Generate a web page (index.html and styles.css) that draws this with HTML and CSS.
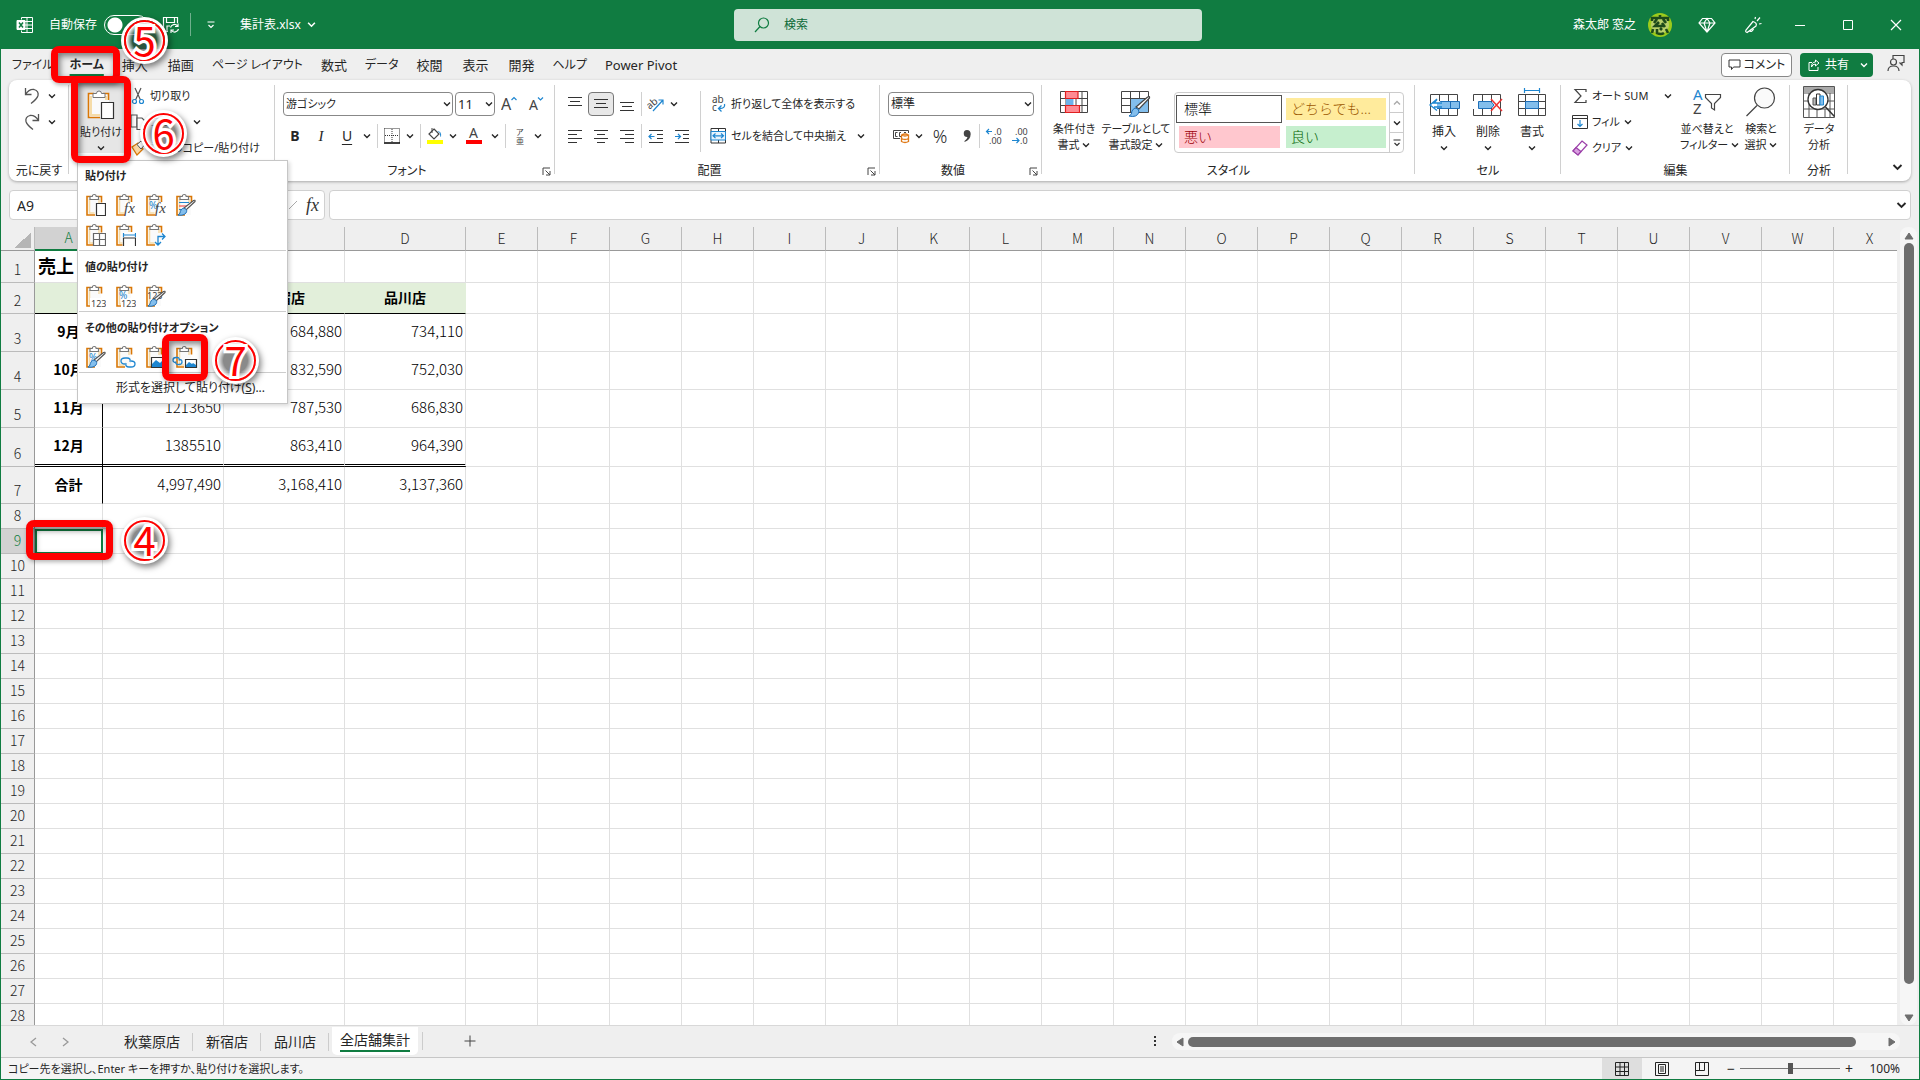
FILE: index.html
```html
<!DOCTYPE html>
<html lang="ja">
<head>
  <meta charset="UTF-8">
  <title>集計表.xlsx - Excel</title>
  <link rel="stylesheet" href="styles.css">
</head>
<body>
  <!-- shared icons -->
  <svg class="defs" aria-hidden="true">
    <symbol id="chev" viewBox="0 0 8 6"><path d="M1 1.5l3 3 3-3" fill="none" stroke="currentColor" stroke-width="1.4"/></symbol>
    <symbol id="clip" viewBox="0 0 20 24">
      <path d="M2 4.500h13v17.500H2z" fill="#fafafa"/>
      <path d="M5 3.500H1v18.500h8M11 3.500h4.500v6" fill="none" stroke="#d97706" stroke-width="1.600"/>
      <path d="M3.500 6v14h5M13 6v4" fill="none" stroke="#f6dca8" stroke-width="1.500"/>
      <path d="M4 6.500v-3h2.200a2 2 0 0 1 4 0h2.300v3z" fill="#fff" stroke="#777" stroke-width="1.200"/>
    </symbol>
    <symbol id="brush" viewBox="0 0 20 24">
      <path d="M19 8.500l-9 8.500-2-2L17.500 7.500q2-.8 1.500 1z" fill="#fff" stroke="#555" stroke-width="1.200"/>
      <path d="M8.500 15.500c2 .5 3 2 1.500 4.500-2 2.500-6 2.500-8 2 2-.5 2-3 3-5 1-1.500 2-2 3.500-1.500z" fill="#83beec" stroke="#1e6fb8"/>
    </symbol>
    <symbol id="launch" viewBox="0 0 9 9"><path d="M1 8V1h7M3.500 3.500L8 8M8 4v4H4" fill="none" stroke="#444"/></symbol>
  </svg>

  <header class="titlebar">
    <div class="title-left">
      <svg class="logo" width="18" height="18" viewBox="0 0 18 18" fill="none" stroke="#fff"><path d="M5.500 3.500v-2h11v15h-11v-2M11 1.500v15M5.500 5.500h11M9 9h7.500M9 12.500h7.500"/><path d="M1 4.500h8v9H1z" fill="#fff"/><path d="M3 6.500l4 5M7 6.500l-4 5" stroke="#107c41" stroke-width="1.500"/></svg>
      <label for="autosave">自動保存</label>
      <input type="checkbox" class="toggle" id="autosave">
      <button class="t-btn save" aria-label="保存"><svg width="18" height="18" viewBox="0 0 18 18" fill="none" stroke="#fff" stroke-width="1.200"><path d="M6 15.500H3.500l-2-2v-12h14V7M4.500 1.500v5h8v-5M5 15v-5h3"/><path d="M8.500 11.500a4 4 0 0 1 7-1.500M16 7.500V10.500h-3M16.500 13a4 4 0 0 1-7 1.500M9 17v-3h3"/></svg></button>
      <span class="t-sep"></span>
      <button class="t-btn custom" aria-label="クイック アクセス"><svg width="8" height="8" viewBox="0 0 8 8" fill="none" stroke="#fff" stroke-width="1.200"><path d="M0.500 1h7M1.500 4l2.500 2.500L6.500 4"/></svg></button>
      <button class="t-btn file">集計表.xlsx <svg width="9" height="7"><use href="#chev"/></svg></button>
    </div>
    <div class="search">
      <svg width="16" height="16" viewBox="0 0 16 16" fill="none" stroke="#107c41" stroke-width="1.200"><circle cx="9.500" cy="6" r="5"/><path d="M6 9.500L1 15"/></svg>
      <input type="text" placeholder="検索" aria-label="検索">
    </div>
    <div class="title-right">
      <span>森太郎 窓之</span>
      <svg class="avatar" width="24" height="24" viewBox="0 0 24 24"><circle cx="12" cy="12" r="12" fill="#9ccb1b"/><circle cx="12" cy="12" r="9" fill="#b9cf6a"/><path d="M4 8V5h16v3M12 2v3M9 6l-3 4M15 6l3 4M11 9l-4 4h9M14 10l3 4M5 16l-1 4M9 16v4q4 2 7 0M12 15l2 2M18 16l2 4" fill="none" stroke="#1d4a1a" stroke-width="2.600"/></svg>
      <button class="t-btn win tool" aria-label="プレミアム"><svg width="18" height="16" viewBox="0 0 18 16" fill="none" stroke="#fff" stroke-width="1.200"><path d="M4.500 1.500h9L17 6 9 15 1 6zM1 6h16M6 6l3 9 3-9-3-4.500z"/></svg></button>
      <button class="t-btn win tool" aria-label="新機能"><svg width="18" height="18" viewBox="0 0 18 18" fill="none" stroke="#fff" stroke-width="1.200"><path d="M9 5.500L2 14q-1 2 1 2.500l9-6.500q1.500-3-3-4.500zM5 14.500q2.500 2.500 4.500-1.500M11 3l.5-2M13 5l3-3.500M15 8l2.500-.5"/></svg></button>
      <button class="t-btn win" aria-label="最小化"><svg width="12" height="12" viewBox="0 0 12 12"><path d="M1 6.500h10" stroke="#fff"/></svg></button>
      <button class="t-btn win" aria-label="最大化"><svg width="12" height="12" viewBox="0 0 12 12"><path d="M1.500 1.500h9v9h-9z" fill="none" stroke="#fff"/></svg></button>
      <button class="t-btn win" aria-label="閉じる"><svg width="12" height="12" viewBox="0 0 12 12"><path d="M1 1l10 10M11 1L1 11" stroke="#fff" stroke-width="1.200"/></svg></button>
    </div>
  </header>

  <nav class="tabs">
    <a href="#" class="tab kana">ファイル</a>
    <a href="#" class="tab kana active">ホーム</a>
    <a href="#" class="tab">挿入</a>
    <a href="#" class="tab">描画</a>
    <a href="#" class="tab kana">ページ レイアウト</a>
    <a href="#" class="tab">数式</a>
    <a href="#" class="tab kana">データ</a>
    <a href="#" class="tab">校閲</a>
    <a href="#" class="tab">表示</a>
    <a href="#" class="tab">開発</a>
    <a href="#" class="tab kana">ヘルプ</a>
    <a href="#" class="tab">Power Pivot</a>
    <div class="tab-actions">
      <button class="comment"><svg width="13" height="12" viewBox="0 0 13 12"><path d="M1 1h11v7H5.500L3.500 10.500V8H1z" fill="none" stroke="#333"/></svg>コメント</button>
      <button class="share"><svg width="12" height="12" viewBox="0 0 12 12" fill="none" stroke="#fff"><path d="M4 3.500H1v8h9V8"/><path d="M7.500 1L11 4 7.500 7V5Q4.500 5 3.500 8 3.500 3 7.500 3z"/></svg>共有<svg class="share-chev" width="8" height="6"><use href="#chev"/></svg></button>
      <button class="people" aria-label="ユーザー"><svg width="18" height="18" viewBox="0 0 18 18" fill="none" stroke="#444" stroke-width="1.200"><path d="M6 5V1.500h11v7h-2v2.500L12.500 8.500"/><circle cx="6.500" cy="8" r="3"/><path d="M1 17q0-5 5.500-5t5.500 5"/></svg></button>
    </div>
  </nav>

  <section class="ribbon">
    <div class="group g-undo">
      <div class="rows3">
        <div class="row"><button class="ib" aria-label="元に戻す"><svg width="16" height="18" viewBox="0 0 16 18" fill="none" stroke="#555" stroke-width="1.300"><path d="M1.500 1v6.500h6M1.500 7.500Q5 2 10 2.500q5 1.500 4 6Q13 12 7 16.500"/></svg></button><button class="ch" aria-label="一覧"><svg width="8" height="6"><use href="#chev"/></svg></button></div>
        <div class="row"><button class="ib" aria-label="やり直し"><svg width="16" height="18" viewBox="0 0 16 18" fill="none" stroke="#555" stroke-width="1.300"><path d="M14.500 1v6.500h-6M14.500 7.500Q11 2 6 2.500q-5 1.500-4 6Q3 12 9 16.500"/></svg></button><button class="ch" aria-label="一覧"><svg width="8" height="6"><use href="#chev"/></svg></button></div>
      </div>
      <div class="label">元に戻す</div>
    </div>

    <div class="group g-clip">
      <div class="cols">
        <button class="big paste">
          <span class="pic"><svg width="28" height="30" viewBox="0 0 28 30"><path d="M2 4h20v23H2z" fill="#fafafa"/><path d="M7 3.500H1.500v24H13M16 3.500h5.500V10" fill="none" stroke="#d97706" stroke-width="1.600"/><path d="M4 6v19h9M19 6v4" fill="none" stroke="#f6dca8" stroke-width="2"/><path d="M6 7.500v-4h3.500a2.500 2.500 0 0 1 5 0H18v4z" fill="#fff" stroke="#777"/><path d="M14.500 12.500h12v16h-12z" fill="#fff" stroke="#333" stroke-width="1.200"/></svg></span>
          貼り付け
          <svg class="down" width="8" height="6"><use href="#chev"/></svg>
        </button>
        <div class="rows3">
          <button class="row cmd"><svg width="16" height="18" viewBox="0 0 16 18" fill="none" stroke="#555" stroke-width="1.200"><path d="M5 1l5.500 12M11 1L5.500 13"/><circle cx="4.500" cy="14.500" r="2" stroke="#1e86d0"/><circle cx="11.500" cy="14.500" r="2" stroke="#1e86d0"/></svg>切り取り</button>
          <button class="row cmd"><svg width="16" height="16" viewBox="0 0 16 16" fill="#fff" stroke="#555" stroke-width="1.200"><path d="M1 1h6v12H1z"/><path d="M7 4h5l3 3v8.500H7z"/></svg>コピー<svg class="c-chev" width="8" height="6"><use href="#chev"/></svg></button>
          <button class="row cmd"><svg width="16" height="16" viewBox="0 0 16 16"><path d="M2 7l6-4 5 6-6 6z" fill="#fbd9a4" stroke="#d97706" stroke-width="1.300"/><path d="M7 4.500L11 1l3.500 4-3.500 4z" fill="#fff" stroke="#555"/></svg>書式のコピー/貼り付け</button>
        </div>
      </div>

      <div class="menu">
        <h3>貼り付け</h3>
        <div class="opts">
          <button aria-label="貼り付け"><svg viewBox="0 0 20 24"><use href="#clip"/><path d="M10.500 10.500h9v12h-9z" fill="#fff" stroke="#333" stroke-width="1.200"/></svg></button>
          <button aria-label="数式"><svg viewBox="0 0 20 24"><use href="#clip"/><path d="M9 9h11v14H9z" fill="#fff"/><text x="8" y="20" class="fx">fx</text></svg></button>
          <button aria-label="数式と数値の書式"><svg viewBox="0 0 20 24"><use href="#clip"/><path d="M10 9h10v14H10z" fill="#fff"/><text x="3" y="16" class="pc">%</text><text x="9" y="20" class="fx">fx</text></svg></button>
          <button aria-label="元の書式を保持"><svg viewBox="0 0 20 24"><use href="#clip"/><path d="M3 9.500h10M3 16.500h6" stroke="#1e86d0"/><path d="M3 13h9" stroke="#e33"/><use href="#brush"/></svg></button>
          <button aria-label="罫線なし"><svg viewBox="0 0 20 24"><use href="#clip"/><path d="M7.500 10.500h12v12h-12zM13.500 10.500v12M7.500 16.500h12" fill="#fff" stroke="#666" stroke-width="1.200"/></svg></button>
          <button aria-label="元の列幅を保持"><svg viewBox="0 0 20 24"><use href="#clip"/><path d="M6.500 9h14v14h-14z" fill="#fff"/><path d="M7.500 23v-8h12v8" fill="#fff" stroke="#333" stroke-width="1.200"/><path d="M7.500 10v4M19.500 10v4M7.500 12h12" stroke="#1e86d0" stroke-width="1.200"/></svg></button>
          <button aria-label="行/列の入れ替え"><svg viewBox="0 0 20 24"><use href="#clip"/><path d="M19 13.500h-7V22M16 10.500l3 3-3 3M9 19l3 3 3-3" fill="none" stroke="#1e86d0" stroke-width="1.300"/></svg></button>
        </div>
        <h3>値の貼り付け</h3>
        <div class="opts">
          <button aria-label="値"><svg viewBox="0 0 20 24"><use href="#clip"/><path d="M4 14h16v9H4z" fill="#fff"/><text x="5" y="23" class="n">123</text></svg></button>
          <button aria-label="値と数値の書式"><svg viewBox="0 0 20 24"><use href="#clip"/><path d="M5 14h15v9H5z" fill="#fff"/><text x="3" y="15" class="pc">%</text><text x="5" y="23" class="n">123</text></svg></button>
          <button aria-label="値と元の書式"><svg viewBox="0 0 20 24"><use href="#clip"/><text x="1" y="15" class="n">123</text><use href="#brush"/></svg></button>
        </div>
        <h3>その他の貼り付けオプション</h3>
        <div class="opts">
          <button aria-label="書式設定"><svg viewBox="0 0 20 24"><use href="#clip"/><text x="3" y="16" class="pc">%</text><use href="#brush"/></svg></button>
          <button aria-label="リンク貼り付け"><svg viewBox="0 0 20 24"><use href="#clip"/><path d="M9 19q-4 0-4-3t4-3h2q4 0 3 4M15 16q4 0 4 3t-4 3h-2q-4 0-3-4" fill="none" stroke="#1e86d0" stroke-width="1.300"/></svg></button>
          <button aria-label="図"><svg viewBox="0 0 20 24"><use href="#clip"/><path d="M5.500 12.500h14v10h-14z" fill="#fff" stroke="#333" stroke-width="1.200"/><path d="M6 22v-3l4-4 4 3 2-2 3 3v3z" fill="#1e86d0"/></svg></button>
          <button aria-label="リンクされた図"><svg class="over" viewBox="0 0 20 24"><use href="#clip"/><path d="M8 13h12v10H8z" fill="#fff"/><path d="M9.500 14.500h11v8h-11z" fill="#fff" stroke="#333" stroke-width="1.200"/><path d="M10 22v-2l3-3 3 2 1-1 3 2v2z" fill="#1e86d0"/><path d="M0 17.500q-3 0-3-2.500t3-2.500h1q3 0 2 3M3 14.500q3 0 3 2.500t-3 2.500H2q-3 0-2-3" fill="none" stroke="#1e86d0" stroke-width="1.300"/></svg></button>
        </div>
        <button class="special">形式を選択して貼り付け(<u>S</u>)...</button>
      </div>
    </div>

    <div class="group g-font">
      <div class="rows2">
        <div class="row">
          <span class="pick name"><select aria-label="フォント"><option>游ゴシック</option></select><svg width="8" height="6"><use href="#chev"/></svg></span>
          <span class="pick size"><select aria-label="サイズ"><option>11</option></select><svg width="8" height="6"><use href="#chev"/></svg></span>
          <button class="ib m" aria-label="拡大"><svg width="16" height="16" viewBox="0 0 16 16"><text x="0" y="14" class="a1">A</text><path d="M10.500 4L13 1.500 15.500 4" fill="none" stroke="#1e86d0" stroke-width="1.200"/></svg></button>
          <button class="ib" aria-label="縮小"><svg width="16" height="16" viewBox="0 0 16 16"><text x="1" y="14" class="a2">A</text><path d="M10 1.500L12.500 4 15 1.500" fill="none" stroke="#1e86d0" stroke-width="1.200"/></svg></button>
        </div>
        <div class="row">
          <button class="ib bold">B</button><button class="ib italic">I</button><button class="ib under">U</button><button class="ch" aria-label="下線"><svg width="8" height="6"><use href="#chev"/></svg></button>
          <span class="sep"></span>
          <button class="ib s" aria-label="罫線"><svg width="16" height="16" viewBox="0 0 16 16" fill="none" stroke="#333"><path d="M.5.500h15v14M.5.500v14M8 1v13M1 7.500h14" stroke-dasharray="1 1"/><path d="M0 15h16" stroke="#000" stroke-width="1.500"/></svg></button><button class="ch" aria-label="罫線一覧"><svg width="8" height="6"><use href="#chev"/></svg></button>
          <span class="sep"></span>
          <button class="ib s" aria-label="塗りつぶし"><svg width="16" height="18" viewBox="0 0 16 18"><path d="M7 2l5 5-5 5-5-5z" fill="#fff" stroke="#444" stroke-width="1.200"/><path d="M5 1v5" stroke="#444"/><path d="M10 4q5 0 4 6-1 0-1-4z" fill="#1e86d0"/><path d="M0 13h16v4H0z" fill="#ff0"/></svg></button><button class="ch" aria-label="塗りつぶしの色"><svg width="8" height="6"><use href="#chev"/></svg></button>
          <button class="ib m" aria-label="文字色"><svg width="16" height="18" viewBox="0 0 16 18"><text x="3" y="11" class="a2">A</text><path d="M0 13h16v4H0z" fill="#f00"/></svg></button><button class="ch" aria-label="文字色一覧"><svg width="8" height="6"><use href="#chev"/></svg></button>
          <span class="sep"></span>
          <button class="ib s" aria-label="ふりがな"><svg width="10" height="18" viewBox="0 0 10 18"><text x="1" y="8" class="ruby">ア</text><text x="1" y="17" class="ruby">亜</text></svg></button><button class="ch" aria-label="ふりがな一覧"><svg width="8" height="6"><use href="#chev"/></svg></button>
        </div>
      </div>
      <div class="label with-launch">フォント<svg class="launch" width="9" height="9"><use href="#launch"/></svg></div>
    </div>

    <div class="group g-align">
      <div class="cols">
        <div class="rows2">
          <div class="row">
            <button class="ib" aria-label="上揃え"><svg width="16" height="16" viewBox="0 0 16 16" stroke="#333"><path d="M1 1.500h14M3 5.500h10M1 9.500h14"/></svg></button>
            <button class="ib on" aria-label="中央揃え"><svg width="16" height="16" viewBox="0 0 16 16" stroke="#333"><path d="M1 3.500h14M3 7.500h10M1 11.500h14"/></svg></button>
            <button class="ib" aria-label="下揃え"><svg width="16" height="16" viewBox="0 0 16 16" stroke="#333"><path d="M1 6.500h14M3 10.500h10M1 14.500h14"/></svg></button>
            <span class="sep thin"></span>
            <button class="ib" aria-label="方向"><svg width="18" height="18" viewBox="0 0 18 18"><text x="-1" y="11" class="ab" transform="rotate(-40 6 8)">ab</text><path d="M6 16L16 5M11.500 5H16v4.500" fill="none" stroke="#1e86d0" stroke-width="1.200"/></svg></button><button class="ch narrow" aria-label="方向一覧"><svg width="8" height="6"><use href="#chev"/></svg></button>
          </div>
          <div class="row">
            <button class="ib" aria-label="左揃え"><svg width="16" height="16" viewBox="0 0 16 16" stroke="#333"><path d="M1 2.500h14M1 6.500h9M1 10.500h14M1 14.500h9"/></svg></button>
            <button class="ib" aria-label="中央"><svg width="16" height="16" viewBox="0 0 16 16" stroke="#333"><path d="M1 2.500h14M4 6.500h8M1 10.500h14M4 14.500h8"/></svg></button>
            <button class="ib" aria-label="右揃え"><svg width="16" height="16" viewBox="0 0 16 16" stroke="#333"><path d="M1 2.500h14M6 6.500h9M1 10.500h14M6 14.500h9"/></svg></button>
            <span class="sep thin"></span>
            <button class="ib" aria-label="インデント減"><svg width="16" height="16" viewBox="0 0 16 16" fill="none" stroke="#333"><path d="M1 2.500h14M9 6.500h6M9 10.500h6M1 14.500h14"/><path d="M6.500 8.500h-5M3.500 6l-2.500 2.500 2.500 2.500" stroke="#1e86d0" stroke-width="1.200"/></svg></button>
            <button class="ib" aria-label="インデント増"><svg width="16" height="16" viewBox="0 0 16 16" fill="none" stroke="#333"><path d="M1 2.500h14M9 6.500h6M9 10.500h6M1 14.500h14"/><path d="M1 8.500h5M4 6l2.500 2.500-2.500 2.500" stroke="#1e86d0" stroke-width="1.200"/></svg></button>
          </div>
        </div>
        <div class="rows2 wrapcol">
          <button class="row cmd"><svg width="18" height="18" viewBox="0 0 18 18"><text x="3" y="8" class="ab">ab</text><text x="3" y="16" class="ab">c</text><path d="M15.500 9q1 4.500-5 4.500M12.500 10.500l-3 3 3 3" fill="none" stroke="#1e86d0" stroke-width="1.300"/></svg>折り返して全体を表示する</button>
          <button class="row cmd"><svg width="18" height="16" viewBox="0 0 18 16" fill="none" stroke="#333"><path d="M2 .5h14.500v14.500H2zM9.500.5v3M9.500 12v3"/><path d="M2 3.500h14.500V12H2z" stroke="#1e86d0" fill="#e8f3fc"/><path d="M4 7.800h10M6.500 5.500L4 7.800l2.500 2.300M12 5.500l2.500 2.300L12 10.100" stroke="#1e86d0" stroke-width="1.200"/></svg>セルを結合して中央揃え<svg class="c-chev" width="8" height="6"><use href="#chev"/></svg></button>
        </div>
      </div>
      <div class="label with-launch">配置<svg class="launch" width="9" height="9"><use href="#launch"/></svg></div>
    </div>

    <div class="group g-num">
      <div class="rows2">
        <div class="row"><span class="pick fmt"><select aria-label="表示形式"><option>標準</option></select><svg width="8" height="6"><use href="#chev"/></svg></span></div>
        <div class="row">
          <button class="ib" aria-label="通貨"><svg width="18" height="16" viewBox="0 0 18 16" fill="none" stroke="#444"><path d="M8 10.500H1.500v-8h15V5M5.500 4.500h-2v4h2M9 4.500H7.500v4H9M12 4.500h2"/><path d="M9.500 7v6.500q3.500 2 7 0V7q-3.500-2-7 0zq3.500 2 7 0M9.500 10.500q3.500 2 7 0" fill="#fff" stroke="#e07b1a" stroke-width="1.300"/></svg></button><button class="ch narrow" aria-label="通貨一覧"><svg width="8" height="6"><use href="#chev"/></svg></button>
          <button class="ib l pct">%</button>
          <button class="ib s comma" aria-label="桁区切り"><svg width="10" height="14" viewBox="0 0 10 14"><path d="M5 1a3.500 3.500 0 1 0 .5 7Q5 10.500 2.500 12v1Q8.500 11 8.700 5 8.500 1 5 1z" fill="#444"/></svg></button>
          <span class="sep thin"></span>
          <button class="ib" aria-label="小数点以下の表示桁数を増やす"><svg width="18" height="18" viewBox="0 0 18 18"><path d="M7 4.500H1.500M4 2L1.500 4.500 4 7" fill="none" stroke="#1e86d0" stroke-width="1.200"/><text x="9" y="8" class="dec">.0</text><text x="4" y="17" class="dec">.00</text></svg></button>
          <button class="ib" aria-label="小数点以下の表示桁数を減らす"><svg width="18" height="18" viewBox="0 0 18 18"><path d="M1 13.500h7M5.500 11L8 13.500 5.500 16" fill="none" stroke="#1e86d0" stroke-width="1.200"/><text x="4" y="8" class="dec">.00</text><text x="9" y="17" class="dec">.0</text></svg></button>
        </div>
      </div>
      <div class="label with-launch">数値<svg class="launch" width="9" height="9"><use href="#launch"/></svg></div>
    </div>

    <div class="group g-style">
      <div class="cols">
        <button class="big b48"><span class="pic"><svg width="28" height="22" viewBox="0 0 28 22"><path d="M.5.500h27v21H.5zM.5 7.500h27M.5 14.500h27M6 .5v21M16 .5v21M22 .5v21" fill="#fff" stroke="#444"/><path d="M5.500.500h12.500v7H5.500zM5.500 14.500h14v7h-14z" fill="#ff8a92" stroke="#e02020" stroke-width="1.200"/><path d="M6 8h7.500v6H6z" fill="#6cb2ea"/></svg></span>条件付き<br>書式 <svg class="down-in" width="8" height="6"><use href="#chev"/></svg></button>
        <button class="big b76"><span class="pic low"><svg width="30" height="28" viewBox="0 0 30 28"><path d="M.5.500h27v21H.5zM.5 7.500h27M.5 14.500h27M9.500.5v21M18.500.5v21" fill="#fff" stroke="#444"/><path d="M10 8h17v13H10z" fill="#83beec"/><path d="M28.500 7L18 18l-3-2L26 6.500q3-2 2.500.5z" fill="#fff" stroke="#444" stroke-width="1.200"/><path d="M14 17q4 0 4 4-2 6-10 4 3-1 3-5 1-2 3-3z" fill="#83beec" stroke="#1e6fb8"/></svg></span>テーブルとして<br>書式設定 <svg class="down-in" width="8" height="6"><use href="#chev"/></svg></button>
        <div class="gallery">
          <button class="sw sel">標準</button>
          <button class="sw neutral">どちらでも...</button>
          <button class="sw bad">悪い</button>
          <button class="sw good">良い</button>
          <div class="scroller">
            <button class="dim" aria-label="上"><svg class="flip" width="8" height="6"><use href="#chev"/></svg></button>
            <button aria-label="下"><svg width="8" height="6"><use href="#chev"/></svg></button>
            <button aria-label="その他"><svg width="8" height="8" viewBox="0 0 8 8" fill="none" stroke="#333" stroke-width="1.200"><path d="M.5 1h7M1.500 4L4 6.500 6.500 4"/></svg></button>
          </div>
        </div>
      </div>
      <div class="label">スタイル</div>
    </div>

    <div class="group g-cell">
      <div class="cols">
        <button class="big b44"><span class="pic"><svg width="32" height="22" viewBox="0 0 32 22"><path d="M2.500.500h27v21h-27zM11.500.5v21M20.500.5v21" fill="#fff" stroke="#444"/><path d="M8 7.500h23.500v7H8zM22.500 7.500v7" fill="#83beec" stroke="#1e6fb8"/><path d="M14 9H6l3-3.500M6 13h8M9 16.500L2 11l7-6" fill="#fff" stroke="#1e86d0" stroke-width="1.300"/></svg></span>挿入<svg class="down" width="8" height="6"><use href="#chev"/></svg></button>
        <button class="big b44"><span class="pic"><svg width="30" height="22" viewBox="0 0 30 22"><path d="M.5.500h27v21H.5zM9.500.5v21M18.500.5v21" fill="#fff" stroke="#444"/><path d="M0 7h18v8H0z" fill="#fff"/><path d="M5.500 7.500H18l3 3.500-3 3.500H5.500z" fill="#83beec" stroke="#1e6fb8"/><path d="M18 5l11 12M29 5L18 17" stroke="#e33" stroke-width="1.500"/></svg></span>削除<svg class="down" width="8" height="6"><use href="#chev"/></svg></button>
        <button class="big b44"><span class="pic up"><svg width="28" height="28" viewBox="0 0 28 28"><path d="M.5 6.500h27v21H.5zM7.500 6.500v21M20.500 6.500v21M.5 13.500h27M.5 20.500h27" fill="#fff" stroke="#444"/><path d="M7.500 13.500h13v7h-13z" fill="#83beec" stroke="#1e6fb8"/><path d="M6.500 0v5M21.500 0v5M6.500 2.500h15" stroke="#1e86d0" stroke-width="1.200"/></svg></span>書式<svg class="down" width="8" height="6"><use href="#chev"/></svg></button>
      </div>
      <div class="label">セル</div>
    </div>

    <div class="group g-edit">
      <div class="cols">
        <div class="rows3 editcol">
          <button class="row cmd sum"><svg width="16" height="16" viewBox="0 0 16 16"><path d="M14 4V1.500H3L9 8l-6 6.500h11V12" fill="none" stroke="#444" stroke-width="1.200"/></svg>オート SUM<svg class="c-chev" width="8" height="6"><use href="#chev"/></svg></button>
          <button class="row cmd"><svg width="16" height="14" viewBox="0 0 16 14" fill="none" stroke="#333"><path d="M.5.500h15v13H.5zM.5 3.500h15"/><path d="M8 5v6.500M5.500 9L8 11.500 10.500 9" stroke="#1e86d0" stroke-width="1.200"/></svg>フィル <svg width="8" height="6"><use href="#chev"/></svg></button>
          <button class="row cmd"><svg width="16" height="16" viewBox="0 0 16 16" fill="#fff" stroke="#9b3fa8" stroke-width="1.200"><path d="M10 1l5 4-9 10-5-4z"/><path d="M4 7.500l5 4L6 15l-5-4z" fill="#d9a0e0"/></svg>クリア <svg width="8" height="6"><use href="#chev"/></svg></button>
        </div>
        <button class="big b54"><span class="pic"><svg width="30" height="28" viewBox="0 0 30 28"><text x="1" y="12" class="az blue">A</text><text x="1" y="26" class="az">Z</text><path d="M13.500 6.500h15v3l-6 6v6.500l-3-2v-4.500l-6-6z" fill="none" stroke="#444" stroke-width="1.200"/></svg></span>並べ替えと<br>フィルター <svg class="down-in" width="8" height="6"><use href="#chev"/></svg></button>
        <button class="big b54"><span class="pic"><svg width="30" height="30" viewBox="0 0 30 30" fill="#fafafa" stroke="#444" stroke-width="1.200"><path d="M11 18.500L.5 29"/><circle cx="18.500" cy="11" r="10"/></svg></span>検索と<br>選択 <svg class="down-in" width="8" height="6"><use href="#chev"/></svg></button>
      </div>
      <div class="label">編集</div>
    </div>

    <div class="group g-ana">
      <div class="cols">
        <button class="big b58"><span class="pic"><svg width="32" height="32" viewBox="0 0 32 32"><path d="M.5.500h31v31H.5zM.5 7h31M.5 15h31M.5 23h31M6 7v24M14 23v8M22 23v8M27 7v24" fill="#fff" stroke="#555"/><path d="M1 1h30v5H1z" fill="#aaa"/><circle cx="15" cy="13.500" r="10" fill="#fff" stroke="#333" stroke-width="1.300"/><path d="M22.500 21l9 9.500" stroke="#333" stroke-width="1.500"/><path d="M10 12h3v7h-3z" fill="#bbb" stroke="#555"/><path d="M13.500 8h3.500v11h-3.500z" fill="#fff" stroke="#333"/><path d="M17 10h3.500v9H17z" fill="#83beec" stroke="#1e86d0"/></svg></span>データ<br>分析</button>
      </div>
      <div class="label">分析</div>
    </div>
    <button class="collapse" aria-label="リボンを折りたたむ"><svg width="11" height="8"><use href="#chev"/></svg></button>
  </section>

  <div class="formula">
    <input class="namebox" type="text" value="A9" aria-label="名前ボックス">
    <div class="fxbox"><svg width="10" height="10" viewBox="0 0 10 10"><path d="M1 9l8-8" stroke="#aaa" fill="none"/></svg><button>fx</button></div>
    <div class="input-wrap"><input type="text" aria-label="数式バー"><svg width="11" height="8"><use href="#chev"/></svg></div>
  </div>

  <main class="main">
    <div class="sheet"><table id="grid"></table></div>
    <div class="vscroll"><button aria-label="上へ"><svg width="10" height="8" viewBox="0 0 10 8"><path d="M5 1l4 6H1z" fill="#6e6e6e" stroke="#6e6e6e"/></svg></button><div class="track"><div class="thumb"></div></div><button aria-label="下へ"><svg width="10" height="8" viewBox="0 0 10 8"><path d="M5 7l4-6H1z" fill="#6e6e6e" stroke="#6e6e6e"/></svg></button></div>
  </main>

  <div class="sheetbar">
    <button class="nav" aria-label="前へ"><svg width="7" height="10" viewBox="0 0 7 10"><path d="M6 1L1 5l5 4" fill="none" stroke="#999" stroke-width="1.300"/></svg></button>
    <button class="nav" aria-label="次へ"><svg width="7" height="10" viewBox="0 0 7 10"><path d="M1 1l5 4-5 4" fill="none" stroke="#999" stroke-width="1.300"/></svg></button>
    <div class="stabs">
      <button class="stab">秋葉原店</button>
      <button class="stab">新宿店</button>
      <button class="stab">品川店</button>
      <button class="stab current"><span>全店舗集計</span></button>
      <span class="endsep"></span>
    </div>
    <button class="add" aria-label="新しいシート"><svg width="12" height="12" viewBox="0 0 12 12"><path d="M6 .5v11M.5 6h11" stroke="#444"/></svg></button>
    <svg class="dots" width="3" height="11" viewBox="0 0 3 11"><path d="M0 0h2v2H0zM0 4h2v2H0zM0 8h2v2H0z" fill="#333"/></svg>
    <div class="hscroll"><button aria-label="左へ"><svg width="8" height="10" viewBox="0 0 8 10"><path d="M1 5l6-4v8z" fill="#6e6e6e" stroke="#6e6e6e"/></svg></button><div class="track"><div class="thumb"></div></div><button aria-label="右へ"><svg width="8" height="10" viewBox="0 0 8 10"><path d="M7 5L1 1v8z" fill="#6e6e6e" stroke="#6e6e6e"/></svg></button></div>
  </div>

  <footer class="status">
    <span class="msg">コピー先を選択し、Enter キーを押すか、貼り付けを選択します。</span>
    <button class="view on" aria-label="標準"><svg width="14" height="14" viewBox="0 0 14 14"><path d="M.5.500h13v13H.5zM5 .5v13M9.500.5v13M.5 5h13M.5 9.500h13" fill="none" stroke="#222"/></svg></button>
    <button class="view" aria-label="ページ レイアウト"><svg width="14" height="14" viewBox="0 0 14 14"><path d="M.5.500h13v13H.5zM3.500 2.500h7v9h-7zM5 5h4M5 7h4M5 9h4" fill="none" stroke="#222"/></svg></button>
    <button class="view" aria-label="改ページ"><svg width="14" height="14" viewBox="0 0 14 14"><path d="M.5.500h13v13H.5zM4.500.5v8M9.500.5v8M.5 8.500h9" fill="none" stroke="#222"/></svg></button>
    <button class="zoom" aria-label="縮小">−</button>
    <input type="range" class="slider" aria-label="ズーム" min="0" max="100" value="50">
    <button class="zoom" aria-label="拡大">+</button>
    <span class="percent">100%</span>
  </footer>

  <!-- step marks -->
  <div class="mark m-home"></div>
  <div class="mark m-paste"></div>
  <div class="mark m-picture"></div>
  <div class="mark m-cell"></div>
  <div class="num n-cell">4</div>
  <div class="num n-home">5</div>
  <div class="num n-paste">6</div>
  <div class="num n-picture">7</div>

  <script>
    const cols = "ABCDEFGHIJKLMNOPQRSTUVWX".split("");
    const widths = { A: 68, B: 121, C: 121, D: 121 };
    const heights = { 1: 32, 2: 31, 3: 38, 4: 38, 5: 38, 6: 39, 7: 37 };
    const data = {
      1: ["売上"],
      2: ["", "秋葉原店", "新宿店", "品川店"],
      3: ["9月", "1142530", "684,880", "734,110"],
      4: ["10月", "1255800", "832,590", "752,030"],
      5: ["11月", "1213650", "787,530", "686,830"],
      6: ["12月", "1385510", "863,410", "964,390"],
      7: ["合計", "4,997,490", "3,168,410", "3,137,360"]
    };

    function renderGrid() {
      let html = `<colgroup><col style="width:34px">`;
      cols.forEach(c => html += `<col style="width:${widths[c] || 72}px">`);
      html += `</colgroup><thead><tr><th class="corner"></th>`;
      cols.forEach(c => html += `<th class="${c === "A" ? "picked" : ""}">${c}</th>`);
      html += `</tr></thead><tbody>`;

      for (let r = 1; r <= 28; r++) {
        html += `<tr class="r${r}" style="height:${heights[r] || 25}px"><th>${r}</th>`;
        cols.forEach((c, i) => {
          const value = (data[r] || [])[i] || "";
          html += `<td class="${i < 4 ? "c" + c : ""}">${value}</td>`;
        });
        html += `</tr>`;
      }
      document.getElementById("grid").innerHTML = html + `</tbody>`;
    }

    renderGrid();
  </script>
</body>
</html>
```
FILE: styles.css
```css
* {
  box-sizing: border-box;
}

body {
  margin: 0;
  height: 100vh;
  display: flex;
  flex-direction: column;
  overflow: hidden;
  position: relative;
  background: #efefef;
  border: 1px solid #107c41;
  border-top: none;
  color: #262626;
  font-family: "Noto Sans", "Noto Sans CJK JP", sans-serif;
  font-size: 12px;
  line-height: 16px;
  font-feature-settings: "palt";
}

button, input, select {
  font: inherit;
  font-feature-settings: inherit;
  color: inherit;
  background: none;
  border: none;
  padding: 0;
  margin: 0;
}

button {
  white-space: nowrap;
}

a {
  color: inherit;
  text-decoration: none;
}

svg {
  flex: none;
}

.defs {
  position: absolute;
  width: 0;
  height: 0;
}

/* title bar */
.titlebar {
  display: flex;
  align-items: center;
  height: 49px;
  flex: none;
  margin: 0 -1px;
  background: #107c41;
  color: #fff;
}

.title-left, .title-right {
  flex: 1 1 0;
  display: flex;
  align-items: center;
}

.logo {
  margin: 0 15px 0 16px;
}

.toggle {
  appearance: none;
  width: 44px;
  height: 20px;
  margin-left: 7px;
  border: 1px solid #fff;
  border-radius: 10px;
  background: radial-gradient(circle at 10px 9px, #fff 7px, transparent 8px);
}

.t-btn {
  display: flex;
  align-items: center;
  justify-content: center;
}

.save {
  margin-left: 14px;
}

.t-sep {
  width: 1px;
  height: 23px;
  margin: 0 16px 0 10px;
  background: #6fb08d;
}

.file {
  margin-left: 25px;
  gap: 6px;
}

.search {
  display: flex;
  align-items: center;
  width: 468px;
  height: 32px;
  margin-left: 16px;
  padding-left: 20px;
  gap: 14px;
  background: #cfe3d7;
  border-radius: 4px;
}

.search input {
  flex: 1;
  outline: none;
}

.search input::placeholder {
  color: #0b6a37;
  opacity: 1;
}

.title-right {
  justify-content: flex-end;
}

.avatar {
  margin: 0 12px;
}

.win {
  width: 48px;
  height: 48px;
}

.win.tool {
  width: 46px;
}

/* tabs */
.tabs {
  display: flex;
  align-items: center;
  height: 31px;
  flex: none;
  padding-left: 3px;
  font-size: 13px;
}

.tab {
  padding: 0 10px;
}

.tab.kana {
  padding: 1px 8px 0;
  font-size: 12px;
}

.tab.active {
  font-weight: bold;
  text-decoration: underline;
  text-decoration-color: #107c41;
  text-decoration-thickness: 2px;
  text-underline-offset: 5px;
}

.tab-actions {
  margin-left: auto;
  display: flex;
  align-items: center;
  font-size: 12px;
  padding-right: 14px;
}

.comment, .share {
  display: flex;
  align-items: center;
  height: 24px;
  border-radius: 4px;
}

.comment {
  width: 71px;
  justify-content: center;
  gap: 3px;
  border: 1px solid #888;
  background: #fff;
}

.share {
  width: 73px;
  margin: 0 14px 0 8px;
  padding-left: 8px;
  gap: 5px;
  background: #107c41;
  color: #fff;
}

.share-chev {
  margin-left: 6px;
}

/* ribbon */
.ribbon {
  display: flex;
  height: 101px;
  flex: none;
  margin: 0 8px;
  background: #fff;
  border-radius: 8px;
  box-shadow: 0 1px 3px rgba(0, 0, 0, 0.3);
  position: relative;
  z-index: 2;
}

.group {
  position: relative;
  flex: none;
  padding-top: 3px;
}

.group::after {
  content: "";
  position: absolute;
  right: 0;
  top: 5px;
  bottom: 7px;
  width: 1px;
  background: #d0d0d0;
}

.g-undo { width: 60px; padding-left: 10px; }
.g-clip { width: 206px; padding-left: 9px; }
.g-font { width: 280px; padding-left: 7px; }
.g-align { width: 325px; padding-left: 7px; }
.g-num { width: 162px; padding-left: 8px; }
.g-style { width: 373px; padding-left: 8px; }
.g-cell { width: 146px; padding-left: 7px; }
.g-edit { width: 229px; padding-left: 11px; }
.g-ana { width: 58px; }

.cols {
  display: flex;
  height: 78px;
}

.rows2, .rows3 {
  height: 78px;
  display: flex;
  flex-direction: column;
}

.rows2 {
  padding-top: 5px;
}

.row {
  display: flex;
  align-items: center;
  flex: none;
  height: 26px;
}

.rows2 .row {
  height: 32px;
}

.label {
  position: absolute;
  left: 0;
  right: 0;
  bottom: 1px;
  text-align: center;
  line-height: 18px;
}

.with-launch {
  padding-right: 16px;
}

.launch {
  position: absolute;
  right: 4px;
  top: 5px;
}

.ib, .ch {
  display: flex;
  align-items: center;
  justify-content: center;
  width: 26px;
  height: 24px;
}

.ib.s { width: 22px; }
.ib.m { width: 28px; }
.ib.l { width: 32px; }
.ch { width: 14px; }
.ch.narrow { width: 10px; }

.ib.on {
  border: 1px solid #777;
  border-radius: 4px;
  background: #e8e8e8;
}

.bold { font-weight: bold; font-size: 14px; }
.italic { font: italic 15px "Liberation Serif", serif; }
.under { font-size: 14px; text-decoration: underline; text-underline-offset: 3px; }
.pct { font-size: 18px; font-weight: 300; }

.sep {
  width: 1px;
  height: 24px;
  margin: 0 3px;
  background: #d0d0d0;
}

.sep.thin {
  margin: 0 1px;
}

.cmd {
  gap: 4px;
  font-size: 11px;
}

.c-chev {
  margin-left: 7px;
}

.sum .c-chev {
  margin-left: 12px;
}

.wrapcol {
  margin-left: 14px;
  position: relative;
}

.wrapcol::before {
  content: "";
  position: absolute;
  left: -9px;
  top: 8px;
  width: 1px;
  height: 61px;
  background: #d0d0d0;
}

.g-align .rows2:first-child {
  width: 133px;
}

.pick {
  position: relative;
  display: flex;
  height: 24px;
}

.pick select {
  appearance: none;
  width: 100%;
  padding: 0 4px 0 2px;
  border: 1px solid #888;
  border-radius: 4px;
  background: #fff;
}

.pick svg {
  position: absolute;
  right: 2px;
  top: 9px;
}

.name { width: 170px; margin: 0 2px 0 1px; }
.name select { font-size: 11px; }
.size { width: 40px; }
.size select { font-size: 13px; }
.fmt { width: 146px; }

.big {
  display: block;
  text-align: center;
  height: 70px;
  font-size: 11px;
}

.b44 { width: 44px; font-size: 12px; }
.b48 { width: 48px; }
.b54 { width: 54px; }
.b58 { width: 58px; }
.b76 { width: 76px; }

.pic {
  display: flex;
  align-items: center;
  justify-content: center;
  height: 38px;
}

.pic.up {
  padding-bottom: 5px;
}

.pic.low {
  padding-top: 5px;
}

.down {
  display: block;
  margin: 5px auto 0;
}

.down-in {
  vertical-align: 1px;
}

.paste {
  width: 46px;
  background: #e6e6e6;
}

.g-clip .rows3 {
  padding-left: 6px;
}

.editcol {
  width: 108px;
}

.gallery {
  display: grid;
  grid-template: 28px 28px / 107px 106px 15px;
  width: 230px;
  height: 61px;
  margin-top: 9px;
  padding: 2px 0 0 1px;
  border: 1px solid #ccc;
  border-radius: 4px;
  font-feature-settings: normal;
}

.sw {
  margin: 3px;
  padding-left: 5px;
  font-size: 14px;
  font-weight: 300;
  line-height: 20px;
  text-align: left;
}

.sel {
  margin: 0 1px 0 0;
  border: 1px solid #555;
  outline: 1px solid #555;
  outline-offset: -1px;
  padding-left: 7px;
  color: #000;
}

.neutral { background: #ffeb9c; color: #9c5700; }
.bad { background: #ffc7ce; color: #9c0006; }
.good { background: #c6efce; color: #006100; }

.scroller {
  grid-area: 1 / 3 / 3 / 4;
  display: flex;
  flex-direction: column;
  margin-top: -2px;
  height: 59px;
  border-left: 1px solid #ccc;
}

.scroller button {
  flex: 1;
  display: flex;
  align-items: center;
  justify-content: center;
}

.scroller button + button {
  border-top: 1px solid #ccc;
}

.dim {
  color: #aaa;
}

.flip {
  transform: rotate(180deg);
}

.collapse {
  margin: 82px 8px 0 auto;
  height: 10px;
  line-height: 10px;
}

/* small letters inside icons */
text {
  font-family: "Noto Sans", "Noto Sans CJK JP", sans-serif;
  fill: #444;
}

.fx { font: italic 15px "Liberation Serif", serif; }
.pc { font-size: 10px; fill: #1e86d0; }
.n { font-size: 9px; }
.a1 { font-size: 16px; }
.a2 { font-size: 14px; }
.ab { font-size: 10px; }
.az { font-size: 15px; }
.blue { fill: #1e86d0; }
.dec { font-size: 9px; }
.ruby { font-size: 8px; }

/* paste menu */
.menu {
  position: absolute;
  left: 8px;
  top: 80px;
  width: 211px;
  z-index: 3;
  padding: 6px 1px 7px;
  background: #fff;
  border: 1px solid #c6c6c6;
  box-shadow: 2px 2px 4px rgba(0, 0, 0, 0.15);
}

.menu h3 {
  margin: 0;
  padding-left: 6px;
  font-size: 11px;
  line-height: 18px;
}

.opts {
  display: grid;
  grid-template-columns: repeat(4, 30px);
  grid-auto-rows: 30px;
  margin-bottom: 7px;
  padding: 5px 0 0 2px;
  border-bottom: 1px solid #ccc;
}

.opts button {
  display: flex;
  align-items: center;
  justify-content: center;
}

.opts svg {
  width: 20px;
  height: 24px;
}

.opts .over {
  overflow: visible;
}

.special {
  display: block;
  padding-left: 37px;
}

/* formula bar */
.formula {
  display: flex;
  height: 30px;
  flex: none;
  margin: 9px 8px 7px;
}

.namebox, .fxbox, .input-wrap {
  background: #fff;
  border: 1px solid #d0d0d0;
  border-radius: 4px;
}

.namebox {
  width: 150px;
  padding: 2px 0 0 7px;
  font-size: 14px;
}

.fxbox {
  display: flex;
  align-items: center;
  justify-content: flex-end;
  width: 160px;
  margin: 0 4px 0 6px;
  padding-right: 5px;
  gap: 8px;
}

.fxbox button {
  font: italic 18px "Liberation Serif", serif;
  color: #333;
}

.input-wrap {
  display: flex;
  align-items: center;
  flex: 1;
  padding-right: 3px;
}

.input-wrap input {
  flex: 1;
}

/* sheet */
.main {
  display: flex;
  flex: 1;
  min-height: 0;
}

.sheet {
  flex: 1;
  min-width: 0;
  overflow: hidden;
  font-family: "Noto Sans CJK JP", sans-serif;
  font-feature-settings: normal;
}

#grid {
  width: 1905px;
  table-layout: fixed;
  border-spacing: 0;
  font-size: 14px;
  line-height: 20px;
}

#grid th, #grid td {
  padding: 0 2px 3px;
  overflow: hidden;
  white-space: nowrap;
}

#grid thead tr {
  height: 24px;
}

#grid th {
  padding: 0 0 2px;
  font-weight: 300;
  background: #efefef;
}

#grid thead th {
  border-right: 1px solid #bbb;
  border-bottom: 1px solid #999;
}

#grid tbody th {
  vertical-align: bottom;
  padding-bottom: 3px;
  border-right: 1px solid #999;
  border-bottom: 1px solid #bbb;
}

#grid .corner {
  background: linear-gradient(135deg, transparent 50%, #b5b5b5 50%) 14px 5px / 16px 16px no-repeat, #efefef;
}

#grid .picked {
  background: #d2d2d2;
  color: #107c41;
  border-bottom: 2px solid #107c41;
}

#grid td {
  background: #fff;
  border-right: 1px solid #e0e0e0;
  border-bottom: 1px solid #e0e0e0;
  color: #000;
  font-size: 15px;
  text-align: right;
  font-weight: 300;
}

#grid .cA {
  text-align: center;
  font-size: 14px;
  font-weight: bold;
}

#grid .r1 .cA {
  font-size: 18px;
  text-align: left;
  padding-left: 3px;
}

#grid .r2 td:nth-child(-n+5) {
  background: #e2efda;
  border-right-color: #e2efda;
  border-bottom-color: #000;
  text-align: center;
  font-size: 14px;
  font-weight: bold;
}

.r3 .cA, .r4 .cA, .r5 .cA, .r6 .cA, .r7 .cA {
  border-right-color: #000 !important;
}

#grid .r6 td:nth-child(-n+5) {
  border-bottom: 3px double #000;
}

#grid .r9 th {
  background: #d2d2d2;
  color: #107c41;
}

#grid .r9 .cA {
  border: 2px solid #107c41;
}

.vscroll {
  display: flex;
  flex-direction: column;
  width: 17px;
  margin: 0 2px 0 3px;
  padding: 2px 0 0;
  border-radius: 8px;
  background: #f6f6f6;
}

.vscroll button {
  height: 14px;
  line-height: 8px;
}

.vscroll .track {
  flex: 1;
}

.vscroll .thumb {
  width: 10px;
  height: 96.5%;
  margin: 0 auto;
  border-radius: 5px;
  background: #6e6e6e;
}

/* sheet tabs */
.sheetbar {
  display: flex;
  align-items: center;
  height: 32px;
  flex: none;
  border-top: 1px solid #d8d8d8;
  font-size: 14px;
}

.nav {
  width: 32px;
  height: 30px;
}

.nav:first-child {
  margin-left: 16px;
}

.stabs {
  display: flex;
  align-items: center;
  align-self: flex-start;
  margin-left: 30px;
}

.stab {
  position: relative;
  height: 30px;
  padding: 1px 13px 0;
}

.stab::after, .endsep {
  content: "";
  position: absolute;
  right: 0;
  top: 7px;
  width: 1px;
  height: 18px;
  background: #ccc;
}

.endsep {
  position: static;
  margin-left: 4px;
}

.stab.current {
  height: 28px;
  margin: -1px 0 0 3px;
  padding: 0 8px;
  background: #fff;
  border-radius: 0 0 5px 5px;
}

.current::after {
  display: none;
}

.current span {
  display: block;
  border-bottom: 2px solid #107c41;
  line-height: 20px;
}

.add {
  margin-left: 41px;
}

.dots {
  margin-left: auto;
}

.hscroll {
  display: flex;
  align-items: center;
  width: 728px;
  height: 17px;
  margin: 0 19px 0 15px;
  border-radius: 8px;
  background: #f6f6f6;
}

.hscroll button {
  width: 16px;
  height: 16px;
  line-height: 10px;
}

.hscroll .track {
  flex: 1;
}

.hscroll .thumb {
  width: 96%;
  height: 10px;
  border-radius: 5px;
  background: #6e6e6e;
}

/* status bar */
.status {
  display: flex;
  align-items: center;
  height: 22px;
  flex: none;
  padding: 0 19px 0 7px;
  background: #f4f4f4;
  border-top: 1px solid #c6c6c6;
}

.msg {
  margin-right: auto;
  font-size: 11px;
}

.view {
  display: flex;
  align-items: center;
  justify-content: center;
  width: 40px;
  height: 21px;
}

.view.on {
  background: #dedede;
}

.zoom {
  width: 18px;
  font-size: 14px;
}

.slider {
  appearance: none;
  width: 100px;
  height: 16px;
  background: linear-gradient(#777, #777) center / 100% 1px no-repeat;
}

.slider::-webkit-slider-thumb {
  appearance: none;
  width: 5px;
  height: 11px;
  background: #555;
}

.percent {
  width: 42px;
  text-align: right;
}

/* step marks over the window */
.mark, .num {
  position: absolute;
  z-index: 10;
  pointer-events: none;
}

.mark {
  border: 7px solid #f00;
  border-radius: 8px;
  box-shadow: 1px 2px 4px rgba(0, 0, 0, 0.3), inset 2px 3px 6px rgba(0, 0, 0, 0.5);
}

.m-home { left: 50px; top: 46px; width: 69px; height: 37px; }
.m-paste { left: 70px; top: 76px; width: 60px; height: 87px; }
.m-picture { left: 161px; top: 334px; width: 46px; height: 47px; }
.m-cell { left: 25px; top: 520px; width: 87px; height: 40px; }

.num {
  width: 41px;
  height: 41px;
  border: 2px solid #f00;
  border-radius: 50%;
  background: radial-gradient(circle, rgba(60, 60, 60, 0.6) 12px, #fff 18px);
  box-shadow: 0 0 0 3px #fff, 2px 3px 6px 3px rgba(0, 0, 0, 0.5);
  color: #f00;
  font: 40px/34px "Noto Sans CJK JP", sans-serif;
  text-align: center;
  -webkit-text-stroke: 6px #fff;
  paint-order: stroke fill;
}

.n-cell { left: 123px; top: 520px; }
.n-home { left: 123px; top: 20px; }
.n-paste { left: 142px; top: 113px; }
.n-picture { left: 214px; top: 340px; }
```
